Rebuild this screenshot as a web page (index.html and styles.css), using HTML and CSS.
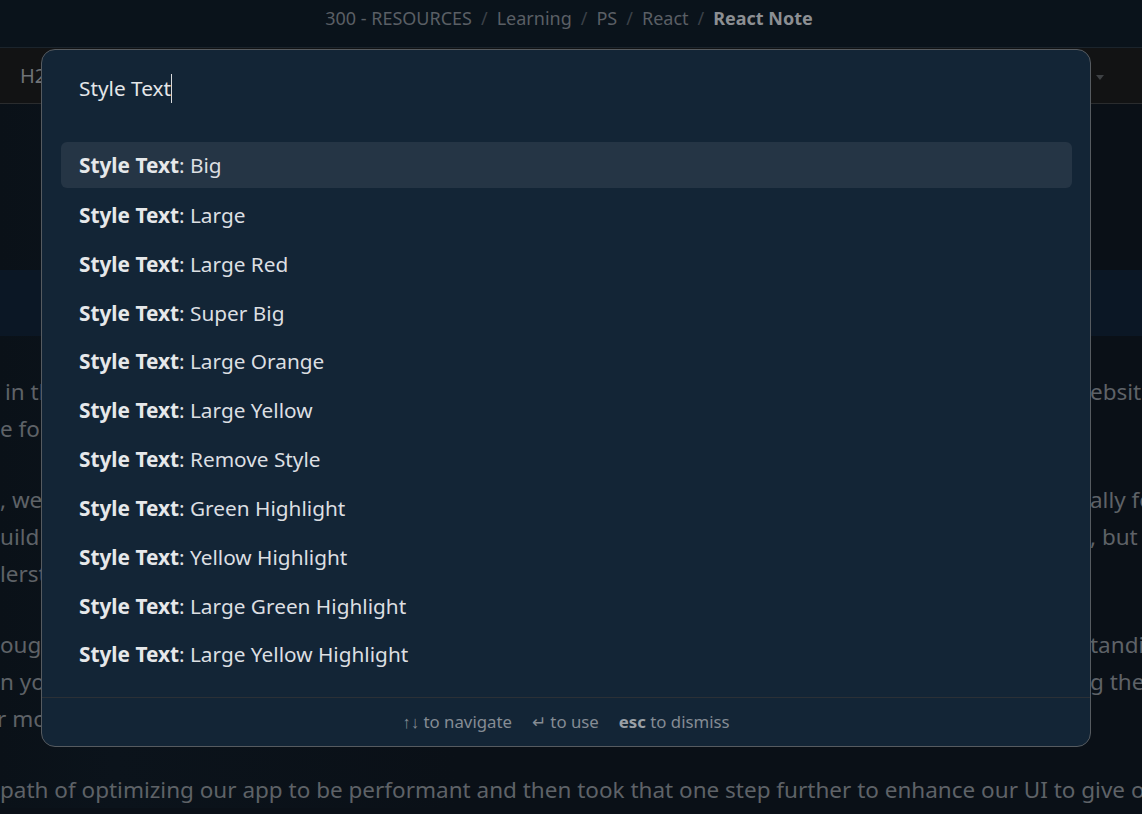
FILE: index.html
```html
<!DOCTYPE html>
<html lang="en">
<head>
<meta charset="utf-8">
<title>React Note</title>
<link rel="stylesheet" href="styles.css">
</head>
<body>
<div class="app">
  <header class="titlebar">
    <nav class="crumbs">
      <span>300 - RESOURCES</span><span class="sep">/</span>
      <span>Learning</span><span class="sep">/</span>
      <span>PS</span><span class="sep">/</span>
      <span>React</span><span class="sep">/</span>
      <span class="current">React Note</span>
    </nav>
  </header>
  <div class="toolbar">
    <span class="tb-h2">H2</span>
    <span class="tb-caret"></span>
  </div>
  <main class="page">
    <div class="hero"></div>
    <div class="banner"></div>
    <div class="prose">
      <div class="line first"><span class="l indent5">in the</span><span class="r">ebsite</span></div>
      <div class="line"><span class="l">e for</span><span class="r"></span></div>
      <div class="line gap"><span class="l">, we</span><span class="r">ally fo</span></div>
      <div class="line"><span class="l">uild</span><span class="r">, but</span></div>
      <div class="line"><span class="l">lerst</span><span class="r"></span></div>
      <div class="line gap"><span class="l">ough</span><span class="r">tandin</span></div>
      <div class="line"><span class="l">n yo</span><span class="r">g the</span></div>
      <div class="line"><span class="l shift">r mo</span><span class="r"></span></div>
      <div class="line gap"><span class="l">path of optimizing our app to be performant and then took that one step further to enhance our UI to give o</span></div>
    </div>
  </main>

  <div class="palette">
    <div class="search">
      <span class="query">Style Text</span><span class="cursor"></span>
    </div>
    <ul class="results">
      <li class="item active"><b>Style Text</b>: Big</li>
      <li class="item"><b>Style Text</b>: Large</li>
      <li class="item"><b>Style Text</b>: Large Red</li>
      <li class="item"><b>Style Text</b>: Super Big</li>
      <li class="item"><b>Style Text</b>: Large Orange</li>
      <li class="item"><b>Style Text</b>: Large Yellow</li>
      <li class="item"><b>Style Text</b>: Remove Style</li>
      <li class="item"><b>Style Text</b>: Green Highlight</li>
      <li class="item"><b>Style Text</b>: Yellow Highlight</li>
      <li class="item"><b>Style Text</b>: Large Green Highlight</li>
      <li class="item"><b>Style Text</b>: Large Yellow Highlight</li>
    </ul>
    <div class="hints">
      <span class="hint">↑↓ to navigate</span>
      <span class="hint">↵ to use</span>
      <span class="hint"><b>esc</b> to dismiss</span>
    </div>
  </div>
</div>
</body>
</html>
```
FILE: styles.css
```css
* { box-sizing: border-box; }
html, body { margin: 0; padding: 0; }
body {
  width: 1142px;
  height: 814px;
  overflow: hidden;
  background: #0a1017;
  font-family: "Noto Sans", "Open Sans", sans-serif;
}
.app {
  position: relative;
  width: 1142px;
  height: 814px;
  overflow: hidden;
}
.titlebar {
  height: 48px;
  background: #0a131b;
  border-bottom: 1px solid #1b242c;
  display: flex;
  align-items: center;
  justify-content: center;
}
.crumbs {
  display: flex;
  gap: 9px;
  font-size: 18px;
  color: #5a5f65;
  padding-right: 4px;
  margin-top: -12px;
}
.crumbs .sep { color: #3b4148; }
.crumbs .current { color: #8c8f93; font-weight: 700; }
.toolbar {
  height: 56px;
  background: #121314;
  border-bottom: 1px solid #2a2c2e;
  display: flex;
  align-items: center;
  justify-content: space-between;
  padding: 0 38px 0 20px;
}
.tb-h2 { color: #6f7276; font-size: 20px; }
.tb-caret {
  width: 0; height: 0;
  border-left: 4px solid transparent;
  border-right: 4px solid transparent;
  border-top: 5px solid #3e4144;
  margin-top: 4px;
}
.page {
  background: linear-gradient(90deg, #0a1118 0%, #0b131b 10%, #0a1017 40%, #0a1017 100%);
}
.hero { height: 166px; }
.banner {
  height: 66px;
  background: #0b1725;
}
.prose {
  padding-top: 37px;
  font-size: 22.5px;
  color: #5e6267;
}
.line {
  display: grid;
  grid-template-columns: 1090px 1fr;
  height: 37px;
  line-height: 37px;
  white-space: nowrap;
  overflow: hidden;
}
.line.gap { margin-top: 34px; }
.line .l { overflow: visible; }
.line .r { overflow: hidden; }
.indent5 { padding-left: 5px; }
.shift { margin-left: -3px; }

.palette {
  position: absolute;
  left: 41px;
  top: 49px;
  width: 1050px;
  height: 698px;
  background: #132536;
  border: 1px solid #565b60;
  border-radius: 14px;
  display: flex;
  flex-direction: column;
  font-family: "Noto Sans", "Open Sans", sans-serif;
}
.search {
  height: 92px;
  padding: 21px 0 0 37px;
  display: flex;
  align-items: flex-start;
  font-size: 20.8px;
  color: #e4e6e8;
}
.query { line-height: 34px; }
.cursor {
  width: 1px;
  height: 29px;
  background: #d8dadc;
  margin-top: 3px;
}
.results {
  list-style: none;
  margin: 0;
  padding: 1px 18px 0 19px;
  flex: 1;
}
.item {
  height: 46px;
  margin-bottom: 2.85px;
  line-height: 46px;
  padding-left: 18px;
  font-size: 20.8px;
  color: #dcdfe2;
  border-radius: 6px;
}
.results .item:first-child { margin-top: -1px; margin-bottom: 3.85px; }
.item b { color: #e6e8ea; font-weight: 700; }
.item.active { background: #253545; }
.hints {
  height: 49px;
  border-top: 1px solid #2b3036;
  display: flex;
  align-items: center;
  justify-content: center;
  gap: 20px;
  font-size: 16.8px;
  color: #858c94;
  padding-bottom: 2px;
}
.hints b { color: #9aa0a6; font-weight: 700; }
```
